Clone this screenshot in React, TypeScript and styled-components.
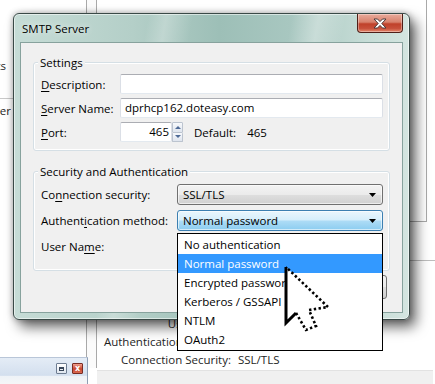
import React, { FC } from 'react';
import styled, { createGlobalStyle, css } from 'styled-components';

const FONT = `"Open Sans", "Noto Sans", sans-serif`;

const GlobalStyle = createGlobalStyle`
	html, body {
		margin: 0;
		padding: 0;
		background: #ffffff;
	}
	* {
		box-sizing: border-box;
	}
	body {
		font-family: ${FONT};
		font-size: 11.5px;
		color: #000;
	}
`;

const Desktop = styled.div`
	position: relative;
	width: 435px;
	height: 384px;
	overflow: hidden;
	background: #ffffff;
	font-family: ${FONT};
	font-size: 11.5px;
`;

/* ---------- window behind the dialog ---------- */

const LeftPane = styled.div`
	position: absolute;
	left: 0;
	top: 0;
	width: 86px;
	height: 357px;
	display: flex;
	flex-direction: column;
	padding-top: 57px;
`;

const ClippedText = styled.div<{ $w: number }>`
	width: ${(p) => p.$w}px;
	height: 18px;
	line-height: 18px;
	display: flex;
	justify-content: flex-end;
	overflow: hidden;
	white-space: nowrap;
	color: #1e1e1e;
`;

const PaneRule = styled.div`
	width: 14px;
	height: 1px;
	margin: 23px 0 3px;
	background: #c9c9c9;
`;

const Splitter = styled.div`
	position: absolute;
	left: 86px;
	top: 0;
	width: 11px;
	height: 368px;
	border-left: 1px solid #a9a9a9;
	border-right: 1px solid #a9a9a9;
	background: #fbfbfb;
`;

const DetailPane = styled.div`
	position: absolute;
	left: 97px;
	top: 0;
	width: 338px;
	height: 370px;
	padding-top: 315px;
`;

const CornerBox = styled.div`
	position: absolute;
	left: 300px;
	top: -1px;
	width: 30px;
	height: 223px;
	border-right: 1px solid #a9a9a9;
	border-bottom: 1px solid #a9a9a9;
`;

const SideRule = styled.div`
	position: absolute;
	left: 308px;
	top: 260px;
	width: 30px;
	height: 1px;
	background: #bdbdbd;
`;

const DetailRow = styled.div`
	display: grid;
	grid-template-columns: 134px auto;
	column-gap: 7px;
	height: 18px;
	line-height: 18px;
	color: #1e1e1e;
	white-space: nowrap;
`;

const DetailLabel = styled.span`
	text-align: right;
	overflow: hidden;
`;

const StatusStrip = styled.div`
	position: absolute;
	left: 97px;
	top: 370px;
	width: 336px;
	height: 14px;
	background: #f0f0f0;
	border-top: 1px solid #e2e2e2;
`;

const MiniWindow = styled.div`
	position: absolute;
	left: 0;
	top: 357px;
	width: 88px;
	height: 30px;
	border-right: 1px solid #8f9fb5;
	border-top: 1px solid #b9c6d8;
	background: linear-gradient(#e4ecf6 0%, #d3dfee 60%, #eef2f7 62%, #f7f7f7 100%);
	display: flex;
	justify-content: flex-end;
	align-items: flex-start;
	gap: 5px;
	padding: 5px 4px 0 0;
`;

const MiniButton = styled.div<{ $close?: boolean }>`
	width: 11px;
	height: 11px;
	border: 1px solid ${(p) => (p.$close ? '#7a2b22' : '#6d7c91')};
	border-radius: 1px;
	background: ${(p) =>
		p.$close
			? 'linear-gradient(#f0a08f, #c8452e 55%, #d86a52)'
			: 'linear-gradient(#ffffff, #dfe6ef)'};
	display: flex;
	align-items: center;
	justify-content: center;
	color: #fff;
	font-size: 8px;
	font-family: "DejaVu Sans", sans-serif;
	font-weight: bold;
	line-height: 1;
`;

const MiniGlyph = styled.div`
	width: 5px;
	height: 4px;
	border: 1px solid #39475a;
	border-top-width: 2px;
`;

/* ---------- SMTP dialog ---------- */

const Dialog = styled.div`
	position: absolute;
	left: 13px;
	top: 13px;
	width: 397px;
	height: 307px;
	border: 1px solid #3a4a47;
	border-radius: 6px;
	background:
		linear-gradient(100deg, rgba(255, 255, 255, 0) 30%, rgba(255, 255, 255, 0.25) 34%, rgba(255, 255, 255, 0) 40%,
			rgba(255, 255, 255, 0) 62%, rgba(255, 255, 255, 0.3) 68%, rgba(255, 255, 255, 0) 74%),
		linear-gradient(90deg, #c6dcd6 0%, #b4cfc8 30%, #9dbfb7 52%, #a8c7c0 70%, #c7ddd7 90%, #d4e5e0 100%);
	box-shadow:
		inset 0 0 0 1px rgba(255, 255, 255, 0.55),
		6px 7px 13px rgba(0, 0, 0, 0.6),
		0 0 6px rgba(0, 0, 0, 0.3);
	display: flex;
	flex-direction: column;
`;

const TitleBar = styled.div`
	height: 28px;
	display: flex;
	align-items: center;
	justify-content: space-between;
	padding-left: 8px;
`;

const TitleText = styled.span`
	font-size: 11.5px;
	color: #000;
	text-shadow: 0 0 6px rgba(255, 255, 255, 0.9);
`;

const CloseButton = styled.div`
	align-self: flex-start;
	width: 46px;
	height: 19px;
	margin-right: 6px;
	border: 1px solid #4f1f18;
	border-top: none;
	border-radius: 0 0 4px 4px;
	background: linear-gradient(#e9ab9c 0%, #d8826d 45%, #c0412a 55%, #c7503a 80%, #e58a6e 100%);
	box-shadow: inset 0 0 0 1px rgba(255, 255, 255, 0.35);
	display: flex;
	align-items: center;
	justify-content: center;
`;

const Body = styled.div`
	flex: 1;
	margin: 0 6px 6px 6px;
	border: 1px solid #87a29d;
	background: #f0f0f0;
	display: flex;
	flex-direction: column;
`;

const Group = styled.div<{ $top: number }>`
	margin: ${(p) => p.$top}px 12px 0 12px;
	padding: 0 6px 0 7px;
	border: 1px solid #d5dfe5;
	border-radius: 3px;
	box-shadow: inset 0 0 0 1px #ffffff;
`;

const GroupTitle = styled.div`
	width: fit-content;
	margin: -8px 0 0 -3px;
	padding: 0 2px;
	line-height: 16px;
	background: #f0f0f0;
`;

const Form = styled.div<{ $label: number; $row: number; $rowGap: number; $top: number; $bottom: number }>`
	display: grid;
	grid-template-columns: ${(p) => p.$label}px 1fr;
	grid-auto-rows: ${(p) => p.$row}px;
	row-gap: ${(p) => p.$rowGap}px;
	align-items: center;
	margin-top: ${(p) => p.$top}px;
	padding-bottom: ${(p) => p.$bottom}px;
`;

const Label = styled.span`
	white-space: nowrap;
`;

const Key = styled.span`
	text-decoration: underline;
	text-underline-offset: 2px;
`;

const TextBox = styled.div<{ $width?: number; $right?: boolean }>`
	height: 20px;
	${(p) => (p.$width ? `width: ${p.$width}px;` : '')}
	border: 1px solid #dbdfe6;
	border-top-color: #abadb3;
	border-bottom-color: #e3e9ef;
	border-radius: 2px;
	background: #fff;
	line-height: 18px;
	white-space: nowrap;
	text-align: ${(p) => (p.$right ? 'right' : 'left')};
	padding: 0 ${(p) => (p.$right ? 2 : 4)}px 0 4px;
`;

const PortRow = styled.div`
	display: flex;
	align-items: center;
	height: 20px;
`;

const Spinner = styled.div`
	width: 11px;
	height: 20px;
	display: flex;
	flex-direction: column;
	margin-right: 11px;
`;

const SpinButton = styled.div<{ $down?: boolean }>`
	flex: 1;
	border: 1px solid #bcc4cf;
	${(p) => (p.$down ? 'border-top: none;' : '')}
	border-radius: 1px;
	background: linear-gradient(#f7f9fc, #dfe5ee);
	display: flex;
	align-items: center;
	justify-content: center;

	&::after {
		content: '';
		width: 0;
		height: 0;
		border-left: 3px solid transparent;
		border-right: 3px solid transparent;
		${(p) =>
			p.$down
				? 'border-top: 3px solid #4e6a96;'
				: 'border-bottom: 3px solid #4e6a96;'}
	}
`;

const DefaultText = styled.span`
	margin-right: 11px;
`;

const selectLook = {
	plain: css`
		border-color: #707070;
		background: linear-gradient(#f3f3f3 0%, #ebebeb 50%, #dedede 52%, #d0d0d0 100%);
	`,
	hot: css`
		border-color: #3c7fb1;
		background: linear-gradient(#eaf6fd 0%, #d5eefb 48%, #aedcf6 52%, #8ccdf0 100%);
	`,
};

const Select = styled.div<{ $hot?: boolean }>`
	height: 21px;
	border: 1px solid;
	border-radius: 3px;
	${(p) => (p.$hot ? selectLook.hot : selectLook.plain)}
	box-shadow: inset 0 0 0 1px rgba(255, 255, 255, 0.6);
	display: flex;
	align-items: center;
	justify-content: space-between;
	padding: 0 6px 0 5px;
	white-space: nowrap;
`;

const Arrow: FC = () => (
	<svg width="7" height="4" viewBox="0 0 7 4">
		<path d="M0 0 H7 L3.5 4 Z" fill="#000" />
	</svg>
);

const ButtonRow = styled.div`
	display: flex;
	justify-content: flex-end;
	gap: 8px;
	margin: 4px 15px 0 0;
`;

// both buttons sit under the open list, only the right edge of one shows
const PushButton = styled.div`
	width: 75px;
	height: 24px;
	border: 1px solid #707070;
	border-radius: 3px;
	background: linear-gradient(#f2f2f2 0%, #ebebeb 50%, #dddddd 52%, #cfcfcf 100%);
`;

/* ---------- open dropdown and pointer ---------- */

const DropList = styled.ul`
	position: absolute;
	left: 177px;
	top: 233px;
	width: 206px;
	margin: 0;
	padding: 1px 0;
	list-style: none;
	border: 1px solid #000;
	background: #fff;
`;

const DropItem = styled.li<{ $selected?: boolean }>`
	height: 19px;
	line-height: 19px;
	padding-left: 6px;
	white-space: nowrap;
	background: ${(p) => (p.$selected ? '#3399ff' : 'transparent')};
	color: ${(p) => (p.$selected ? '#ffffff' : '#000000')};
`;

const Pointer = styled.svg`
	position: absolute;
	left: 283px;
	top: 264px;
`;

const authOptions = [
	'No authentication',
	'Normal password',
	'Encrypted password',
	'Kerberos / GSSAPI',
	'NTLM',
	'OAuth2',
];

const App: FC = () => {
	return (
		<>
			<GlobalStyle />
			<Desktop>
				<LeftPane>
					<ClippedText $w={6}>Accounts</ClippedText>
					<PaneRule />
					<ClippedText $w={11}>Outgoing Server</ClippedText>
				</LeftPane>
				<Splitter />
				<DetailPane>
					<CornerBox />
					<SideRule />
					<DetailRow>
						<DetailLabel>User Name:</DetailLabel>
					</DetailRow>
					<DetailRow>
						<DetailLabel>Authentication method:</DetailLabel>
					</DetailRow>
					<DetailRow>
						<DetailLabel>Connection Security:</DetailLabel>
						<span>SSL/TLS</span>
					</DetailRow>
				</DetailPane>
				<StatusStrip />
				<MiniWindow>
					<MiniButton>
						<MiniGlyph />
					</MiniButton>
					<MiniButton $close>x</MiniButton>
				</MiniWindow>

				<Dialog>
					<TitleBar>
						<TitleText>SMTP Server</TitleText>
						<CloseButton>
							<svg width="14" height="11" viewBox="0 0 14 11">
								<path
									d="M1 1 H4.5 L7 3.6 L9.5 1 H13 L8.8 5.5 L13 10 H9.5 L7 7.4 L4.5 10 H1 L5.2 5.5 Z"
									fill="#ffffff"
									stroke="#4a3a3a"
									strokeWidth="1"
									strokeLinejoin="round"
								/>
							</svg>
						</CloseButton>
					</TitleBar>
					<Body>
						<Group $top={19}>
							<GroupTitle>Settings</GroupTitle>
							<Form $label={79} $row={20} $rowGap={4} $top={3} $bottom={8}>
								<Label>
									<Key>D</Key>escription:
								</Label>
								<TextBox />
								<Label>
									<Key>S</Key>erver Name:
								</Label>
								<TextBox>dprhcp162.doteasy.com</TextBox>
								<Label>
									<Key>P</Key>ort:
								</Label>
								<PortRow>
									<TextBox $width={52} $right>
										465
									</TextBox>
									<Spinner>
										<SpinButton />
										<SpinButton $down />
									</Spinner>
									<DefaultText>Default:</DefaultText>
									<span>465</span>
								</PortRow>
							</Form>
						</Group>
						<Group $top={20}>
							<GroupTitle>Security and Authentication</GroupTitle>
							<Form $label={136} $row={21} $rowGap={5} $top={4} $bottom={13}>
								<Label>
									Co<Key>n</Key>nection security:
								</Label>
								<Select>
									<span>SSL/TLS</span>
									<Arrow />
								</Select>
								<Label>
									Authent<Key>i</Key>cation method:
								</Label>
								<Select $hot>
									<span>Normal password</span>
									<Arrow />
								</Select>
								<Label>
									User Na<Key>m</Key>e:
								</Label>
								<TextBox />
							</Form>
						</Group>
						<ButtonRow>
							<PushButton />
							<PushButton />
						</ButtonRow>
					</Body>
				</Dialog>

				<DropList>
					{authOptions.map((option) => (
						<DropItem key={option} $selected={option === 'Normal password'}>
							{option}
						</DropItem>
					))}
				</DropList>

				<Pointer width="48" height="70" viewBox="0 0 48 70">
					<polygon
						points="3,3 3,59 13,49 23,66 33,62 26,46 45,43"
						fill="#ffffff"
					/>
					<path d="M3 3 V59 L13 49" stroke="#000" strokeWidth="3" fill="none" />
					<path
						d="M13 49 L23 66 L33 62 L26 46 L45 43 L3 3"
						stroke="#000"
						strokeWidth="2.6"
						strokeDasharray="2.4 2.4"
						fill="none"
					/>
				</Pointer>
			</Desktop>
		</>
	);
};

export default App;
